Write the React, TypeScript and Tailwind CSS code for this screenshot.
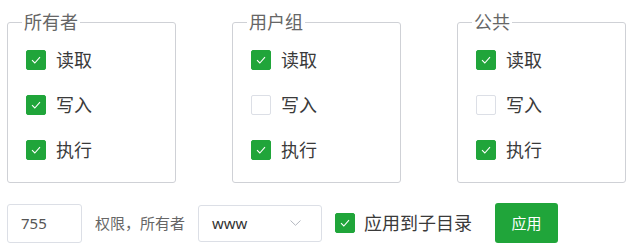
import React from "react";

type Perm = { label: string; checked: boolean };

const groups: { title: string; perms: Perm[] }[] = [
  {
    title: "所有者",
    perms: [
      { label: "读取", checked: true },
      { label: "写入", checked: true },
      { label: "执行", checked: true },
    ],
  },
  {
    title: "用户组",
    perms: [
      { label: "读取", checked: true },
      { label: "写入", checked: false },
      { label: "执行", checked: true },
    ],
  },
  {
    title: "公共",
    perms: [
      { label: "读取", checked: true },
      { label: "写入", checked: false },
      { label: "执行", checked: true },
    ],
  },
];

const Box = ({ checked }: { checked: boolean }) => (
  <span
    className={`flex h-[20px] w-[20px] shrink-0 items-center justify-center rounded-[2px] border ${
      checked ? "border-[#20a53a] bg-[#20a53a]" : "border-[#dcdfe6] bg-white"
    }`}
  >
    {checked && (
      <svg width="10" height="8" viewBox="0 0 10 8" fill="none">
        <path d="M1 4.2 L3.8 7 L9 1.2" stroke="#fff" strokeWidth="1.1" />
      </svg>
    )}
  </span>
);

const App = () => {
  return (
    <div
      className="h-[247px] w-[637px] bg-white pl-[7px] pt-[12px]"
      style={{ fontFamily: '"Noto Sans", "Noto Sans CJK SC", sans-serif' }}
    >
      <div className="flex gap-[56px]">
        {groups.map((g) => (
          <fieldset
            key={g.title}
            className="w-[169px] rounded-[3px] border border-[#cfd1d6] pb-[22px] pl-[14px]"
          >
            <legend className="px-[2px] text-[18px] leading-[20px] text-[#666]">
              {g.title}
            </legend>
            <div className="flex flex-col gap-[25px] pl-[4px] pt-[18px]">
              {g.perms.map((p) => (
                <label
                  key={p.label}
                  className="flex h-[20px] items-center gap-[10px] text-[18px] text-[#3a3a3a]"
                >
                  <Box checked={p.checked} />
                  <span className="leading-[20px]">{p.label}</span>
                </label>
              ))}
            </div>
          </fieldset>
        ))}
      </div>

      <div className="mt-[20px] flex items-center">
        <div className="flex h-[39px] w-[75px] items-center rounded-[3px] border border-[#dcdfe6] pl-[13px] text-[15px] text-[#555]">
          755
        </div>
        <span className="ml-[13px] text-[15px] text-[#666]">权限，所有者</span>
        <div className="ml-[13px] flex h-[37px] w-[124px] items-center justify-between rounded-[3px] border border-[#dcdfe6] pl-[13px] pr-[20px] text-[15px] text-[#333]">
          <span>www</span>
          <svg width="11" height="6" viewBox="0 0 11 6" fill="none">
            <path d="M0.5 0.5 L5.5 5.3 L10.5 0.5" stroke="#b4b8c0" strokeWidth="1" />
          </svg>
        </div>
        <label className="ml-[13px] flex items-center gap-[9px] text-[18px] text-[#3a3a3a]">
          <Box checked />
          <span>应用到子目录</span>
        </label>
        <button className="ml-[23px] flex h-[40px] w-[63px] items-center justify-center rounded-[3px] bg-[#20a53a] text-[15px] text-white">
          应用
        </button>
      </div>
    </div>
  );
};

export default App;
